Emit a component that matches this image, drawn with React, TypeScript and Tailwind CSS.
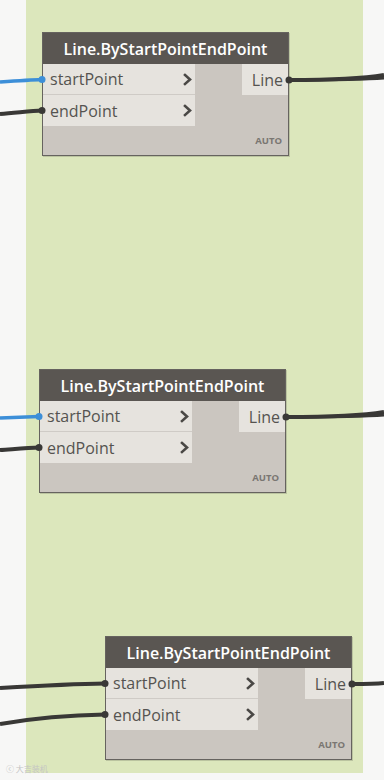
import React from 'react';

type NodeProps = {
  left: number;
  top: number;
};

const font = { fontFamily: '"Open Sans", "Noto Sans", sans-serif' };

const Chevron: React.FC = () => (
  <svg width={9} height={13} viewBox="0 0 9 13" className="shrink-0">
    <polyline points="2,2 7,6.5 2,11" fill="none" stroke="#4a4845" strokeWidth={2.6} strokeLinecap="square" />
  </svg>
);

const Port: React.FC<{ label: string; last?: boolean }> = ({ label, last }) => (
  <div
    className={`flex h-[31px] items-center justify-between bg-[#e6e3de] pl-[7px] pr-[3px] ${
      last ? '' : 'border-b border-[#cfcbc6]'
    }`}
  >
    <span className="text-[16px] text-[#555350]">{label}</span>
    <Chevron />
  </div>
);

const LineNode: React.FC<NodeProps> = ({ left, top }) => (
  <div
    className="absolute flex h-[124px] w-[247px] flex-col border border-[#66635f] bg-[#cbc6c0] shadow-[1px_1px_0_rgba(0,0,0,0.15)]"
    style={{ left, top, ...font }}
  >
    <div className="flex h-[31px] items-center justify-center bg-[#5a5652] text-[16px] font-semibold text-white">
      Line.ByStartPointEndPoint
    </div>
    <div className="flex flex-1">
      <div className="flex w-[152px] flex-col">
        <Port label="startPoint" />
        <Port label="endPoint" last />
      </div>
      <div className="flex flex-1 flex-col items-end">
        <div className="flex h-[31px] w-[46px] items-center justify-end bg-[#e6e3de] pr-[5px] text-[16px] text-[#555350]">
          Line
        </div>
      </div>
    </div>
    <div className="flex h-[29px] items-end justify-end pb-[7px] pr-[6px] text-[9.5px] font-bold text-[#7a7672]">
      AUTO
    </div>
  </div>
);

export default function App() {
  const dark = '#393836';
  const blue = '#3d8fd8';
  return (
    <div className="relative h-[780px] w-[384px] overflow-hidden bg-[#f7f7f6]">
      <div className="ml-[26px] h-[773px] w-[337px] bg-[#dce7bc]" />

      <LineNode left={42} top={32} />
      <LineNode left={39} top={369} />
      <LineNode left={105} top={636} />

      <svg className="absolute left-0 top-0" width={384} height={780} viewBox="0 0 384 780">
        {/* node 1 */}
        <path d="M0 82 C 15 81, 30 80, 42 79.5" stroke={blue} strokeWidth={3.5} fill="none" />
        <path d="M0 114 C 15 113, 30 111, 42 110.5" stroke={dark} strokeWidth={4} fill="none" />
        <path d="M289 80 C 330 80, 360 79, 384 75" stroke={dark} strokeWidth={4} fill="none" />
        <path d="M289 80 C 330 80, 360 80, 384 78" stroke={dark} strokeWidth={3} fill="none" />
        <circle cx={42} cy={79.5} r={3.5} fill={blue} />
        <circle cx={42} cy={110.5} r={3.5} fill={dark} />
        <circle cx={289} cy={80} r={3.5} fill={dark} />

        {/* node 2 */}
        <path d="M0 418 C 15 417.5, 28 417, 39 416.5" stroke={blue} strokeWidth={3.5} fill="none" />
        <path d="M0 450 C 15 449, 28 448, 39 447.5" stroke={dark} strokeWidth={4} fill="none" />
        <path d="M286 417 C 330 417, 360 416, 384 412" stroke={dark} strokeWidth={4} fill="none" />
        <path d="M286 417 C 330 417, 360 417, 384 415" stroke={dark} strokeWidth={3} fill="none" />
        <circle cx={39} cy={416.5} r={3.5} fill={blue} />
        <circle cx={39} cy={447.5} r={3.5} fill={dark} />
        <circle cx={286} cy={417} r={3.5} fill={dark} />

        {/* node 3 */}
        <path d="M0 688 C 35 686, 70 684, 105 683.5" stroke={dark} strokeWidth={4} fill="none" />
        <path d="M0 724 C 35 718, 70 715, 105 714.5" stroke={dark} strokeWidth={4} fill="none" />
        <path d="M352 684 C 365 684, 375 684, 384 683" stroke={dark} strokeWidth={4} fill="none" />
        <circle cx={105} cy={683.5} r={3.5} fill={dark} />
        <circle cx={105} cy={714.5} r={3.5} fill={dark} />
        <circle cx={352} cy={684} r={3.5} fill={dark} />
      </svg>

      <div
        className="absolute left-[6px] top-[765px] text-[8px] leading-none text-[#c4c4c4]"
        style={{ fontFamily: '"Noto Sans CJK SC", sans-serif' }}
      >
        ⓒ 大吉装机
      </div>
    </div>
  );
}
